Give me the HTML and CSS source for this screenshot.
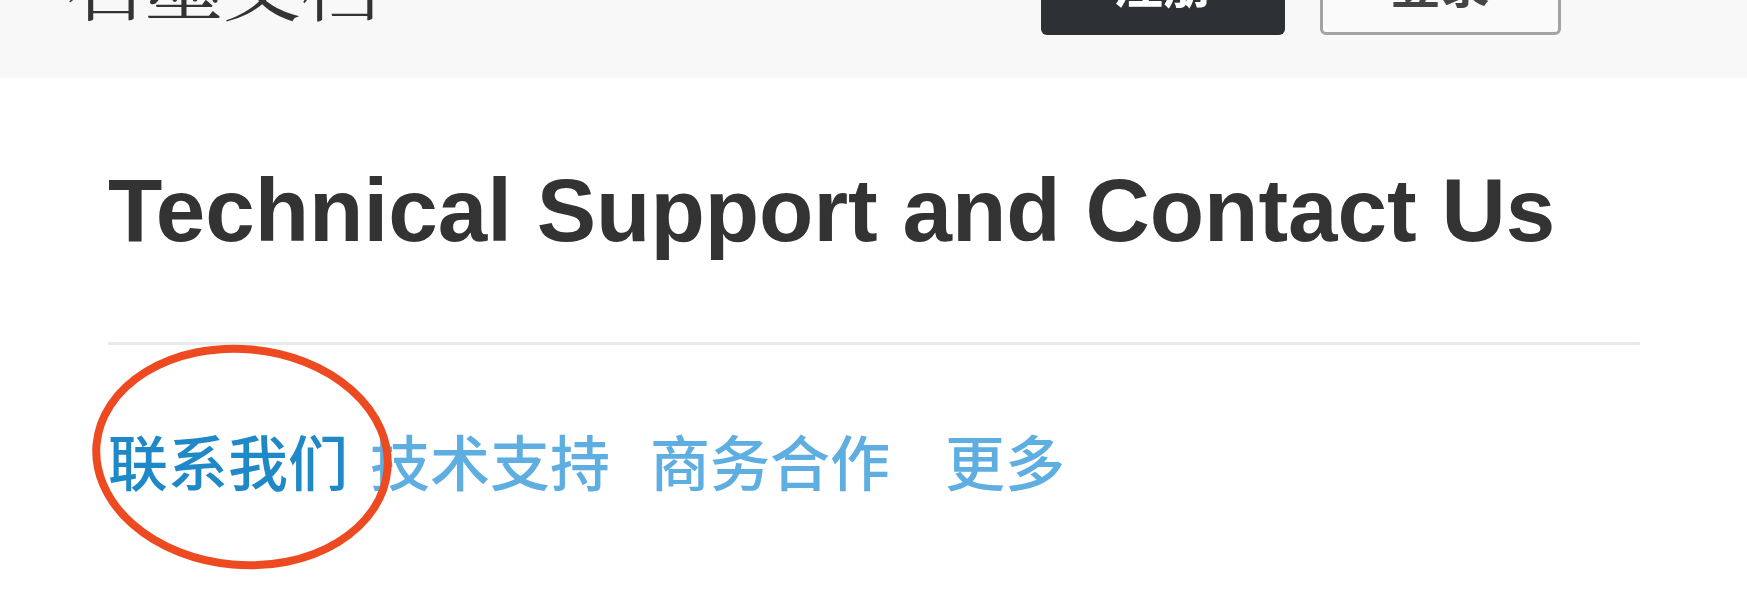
FILE: index.html
```html
<!DOCTYPE html>
<html lang="zh-CN">
<head>
<meta charset="utf-8">
<title>Technical Support and Contact Us</title>
<link rel="stylesheet" href="styles.css">
</head>
<body>
<header class="topbar">
  <div class="brand">石墨文档</div>
  <div class="actions">
    <a class="btn btn-dark" href="#">注册</a>
    <a class="btn btn-outline" href="#">登录</a>
  </div>
</header>
<main class="content">
  <h1 class="title">Technical Support and Contact Us</h1>
  <div class="rule"></div>
  <nav class="tabs">
    <a class="tab tab-active" href="#">联系我们</a>
    <a class="tab" href="#">技术支持</a>
    <a class="tab tab-biz" href="#">商务合作</a>
    <a class="tab tab-more" href="#">更多</a>
  </nav>
</main>
<svg class="mark" width="1747" height="600" viewBox="0 0 1747 600" aria-hidden="true">
  <ellipse cx="242" cy="457" rx="146" ry="108" transform="rotate(5 242 457)" fill="none" stroke="#ee4a22" stroke-width="8"/>
</svg>
</body>
</html>
```
FILE: styles.css
```css
html, body {
  margin: 0;
  padding: 0;
  background: #ffffff;
}
body {
  width: 1747px;
  height: 600px;
  overflow: hidden;
  position: relative;
  font-family: "Liberation Sans", "Noto Sans CJK SC", sans-serif;
}
.topbar {
  height: 78px;
  background: #f8f8f8;
  display: flex;
  align-items: flex-start;
  justify-content: space-between;
  overflow: hidden;
  padding: 0 186px 0 67px;
}
.brand {
  font-family: "Noto Serif CJK SC", "Noto Sans CJK SC", serif;
  font-size: 78px;
  line-height: 78px;
  color: #333333;
  margin-top: -58px;
}
.actions {
  display: flex;
  gap: 35px;
  margin-top: -75px;
}
.btn {
  display: flex;
  align-items: flex-start;
  justify-content: center;
  box-sizing: border-box;
  height: 110px;
  padding-top: 31px;
  font-family: "Noto Sans CJK SC", sans-serif;
  font-weight: 700;
  font-size: 50px;
  line-height: 50px;
  text-decoration: none;
  border-radius: 6px;
}
.btn-dark {
  width: 244px;
  background: #2d3135;
  color: #ffffff;
}
.btn-outline {
  width: 241px;
  background: #fafafa;
  border: 3px solid #a3a3a3;
  padding-top: 28px;
  color: #444444;
}
.content {
  padding: 0 107px 0 108px;
}
.title {
  margin: 81px 0 0 0;
  font-family: "Liberation Sans", Arial, sans-serif;
  font-weight: 700;
  font-size: 89px;
  line-height: 102px;
  color: #333333;
}
.rule {
  margin-top: 81px;
  height: 3px;
  background: #e7eaeb;
}
.tabs {
  display: flex;
  gap: 22px;
  margin-top: 85px;
}
.tab {
  font-family: "Noto Sans CJK SC", sans-serif;
  font-weight: 500;
  font-size: 60px;
  line-height: 60px;
  color: #5eaee2;
  text-decoration: none;
}
.tab-active {
  color: #1f88c6;
}
.tab-biz {
  margin-left: 18px;
}
.tab-more {
  margin-left: 33px;
}
.mark {
  position: absolute;
  left: 0;
  top: 0;
  pointer-events: none;
}
```
